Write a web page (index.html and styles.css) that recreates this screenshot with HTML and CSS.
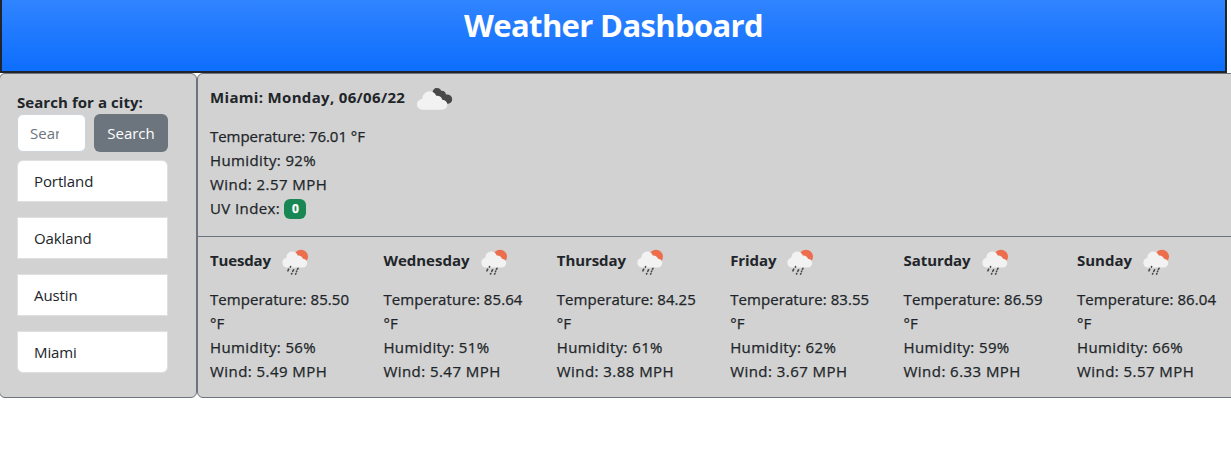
FILE: index.html
```html
<!DOCTYPE html>
<html lang="en">
<head>
<meta charset="utf-8">
<title>Weather Dashboard</title>
<link rel="stylesheet" href="styles.css">
</head>
<body>
<svg class="defs" width="0" height="0">
  <symbol id="rain" viewBox="0 0 28 28">
    <circle cx="20" cy="7.700" r="7" fill="#ec6e4c"/>
    <path d="M5.500 18.500a5 5 0 0 1-.2-9.800C5.500 4.900 8 2.600 11.300 2.600c2.600 0 4.400 1.300 5.500 3.900 2.700-.2 4.500 1.200 5.200 3.300 2.700.2 4.200 1.900 4.200 4.100 0 2.700-1.900 4.600-4.600 4.600z" fill="#f2f2f2"/>
    <path d="M9.600 17.500l-.2.600M7.700 20.200l-.8 1.700M12.600 20.800l-.9 1.500M17 19.300l-.6 1M15.700 22.200l-.2.400M10.800 24.500l-.3.500M14.900 24.500l-.3.600" stroke="#484848" stroke-width="1.600" stroke-linecap="round"/>
  </symbol>
  <symbol id="clouds" viewBox="0 0 36 24">
    <path d="M15.500 6c0-2.900 1.900-5 4.500-5 2.200 0 3.700 1.200 4.300 2.900 2.500-.3 4.200 1 4.600 3.600 3.600-.4 6.300 1.700 6.300 4.700 0 2.900-2 4.500-4.800 4.500-3 0-5.300-1.500-7.500-3.500z" fill="#484848"/>
    <path d="M5.500 22.800A5.400 5.400 0 0 1 5.100 12C5.600 7.300 8.600 4.200 12.700 4.200c3 0 5.300 1.500 6.500 4.500 3.300-.3 5.400 1.300 6.100 4 3 .2 5 2.100 5 4.900 0 3-2.200 5.200-5.200 5.200z" fill="#f2f2f2"/>
  </symbol>
</svg>
<header class="banner"><h1>Weather Dashboard</h1></header>
<main class="layout">
  <aside class="sidebar">
    <label class="label" for="city">Search for a city:</label>
    <form class="search">
      <input id="city" class="field" type="text" placeholder="Search">
      <button class="button" type="button">Search</button>
    </form>
    <ul class="cities"><li>Portland</li><li>Oakland</li><li>Austin</li><li>Miami</li></ul>
  </aside>
  <section class="weather">
    <article class="today">
      <h2 class="title current">Miami: Monday, 06/06/22<svg class="clouds"><use href="#clouds"/></svg></h2>
      <p>Temperature: 76.01 °F</p><p class="humidity">Humidity: 92%</p><p class="wind">Wind: 2.57 MPH</p><p class="uv">UV Index: <span class="badge">0</span></p>
    </article>
    <div class="forecast">
      <article><h2 class="title tue">Tuesday<svg class="rain"><use href="#rain"/></svg></h2><p class="temp">Temperature: 85.50<br>°F</p><p class="humidity">Humidity: 56%</p><p class="wind">Wind: 5.49 MPH</p></article>
      <article><h2 class="title">Wednesday<svg class="rain"><use href="#rain"/></svg></h2><p class="temp">Temperature: 85.64<br>°F</p><p class="humidity">Humidity: 51%</p><p class="wind">Wind: 5.47 MPH</p></article>
      <article><h2 class="title thu">Thursday<svg class="rain"><use href="#rain"/></svg></h2><p class="temp">Temperature: 84.25<br>°F</p><p class="humidity">Humidity: 61%</p><p class="wind">Wind: 3.88 MPH</p></article>
      <article><h2 class="title thu">Friday<svg class="rain"><use href="#rain"/></svg></h2><p class="temp">Temperature: 83.55<br>°F</p><p class="humidity">Humidity: 62%</p><p class="wind">Wind: 3.67 MPH</p></article>
      <article><h2 class="title thu">Saturday<svg class="rain"><use href="#rain"/></svg></h2><p class="temp">Temperature: 86.59<br>°F</p><p class="humidity">Humidity: 59%</p><p class="wind">Wind: 6.33 MPH</p></article>
      <article><h2 class="title">Sunday<svg class="rain"><use href="#rain"/></svg></h2><p class="temp">Temperature: 86.04<br>°F</p><p class="humidity">Humidity: 66%</p><p class="wind">Wind: 5.57 MPH</p></article>
    </div>
  </section>
</main>
</body>
</html>
```
FILE: styles.css
```css
* { box-sizing: border-box; }
body { margin: 0; overflow: hidden; background: #fff; color: #212529; font: 500 15px/24px "Open Sans", "Noto Sans", sans-serif; }
h1, h2, p, ul { margin: 0; padding: 0; }
.defs { display: block; }
.banner { width: 1227px; height: 73px; border: solid #212529; border-width: 0 2px 2px; background: linear-gradient(#3084ff, #0d6efd); text-align: center; }
.banner h1 { color: #fff; font-size: 31px; font-weight: 700; line-height: 38px; padding-top: 6px; letter-spacing: -0.65px; }
.layout { display: flex; width: 1239px; height: 325px; }
.sidebar { width: 198px; margin-left: -1px; padding: 16px 28px 0 17px; border: 1px solid #6c757d; border-radius: 6px; background: #d2d2d2; }
.label { display: block; font-weight: 700; letter-spacing: 0.06px; white-space: nowrap; }
.search { display: flex; gap: 8px; }
.field { width: 69px; height: 38px; padding: 0 26px 0 12px; border: 1px solid #ced4da; border-radius: 6px; background: #fff; font: 400 15px "Open Sans", sans-serif; }
.field::placeholder { color: #6c757d; opacity: 1; }
.button { width: 74px; height: 38px; padding: 0; border: 0; border-radius: 6px; background: #6c757d; color: #fff; font: 400 15px "Open Sans", sans-serif; }
.cities { display: grid; gap: 15px; margin-top: 8px; list-style: none; width: 151px; }
.cities li { height: 42px; padding: 8px 16px; border: 1px solid #dfdfdf; background: #fff; font-weight: 400; letter-spacing: -0.1px; }
.cities li:first-child { border-radius: 6px 6px 0 0; }
.cities li:last-child { border-radius: 0 0 6px 6px; }
.weather { flex: 1; border: 1px solid #6c757d; border-radius: 6px; background: #d2d2d2; overflow: hidden; }
.today { height: 163px; padding: 11px 12px 0; border-bottom: 1px solid #6c757d; }
.title { display: flex; align-items: center; height: 24px; margin-bottom: 15px; font-size: 15px; font-weight: 700; }
.current { letter-spacing: 0.33px; }
.tue { letter-spacing: -0.15px; }
.thu { letter-spacing: -0.08px; }
.clouds { width: 36px; height: 24px; margin: 3px 0 0 12px; }
.badge { display: inline-block; width: 22px; height: 20px; border-radius: 6px; background: #198754; color: #fff; font-size: 12px; font-weight: 700; line-height: 20px; text-align: center; vertical-align: 1px; letter-spacing: 0; }
.forecast { display: grid; grid-template-columns: repeat(6, 173.4px); padding: 11px 0 0 12px; }
.rain { width: 28px; height: 28px; margin: 5px 0 0 10px; }
p { height: 24px; white-space: nowrap; letter-spacing: -0.05px; -webkit-text-stroke: 0.25px currentColor; }
.temp { height: 48px; letter-spacing: 0.07px; }
.humidity { letter-spacing: 0.38px; }
.wind { letter-spacing: 0.45px; }
.uv { letter-spacing: 0.4px; }
```
